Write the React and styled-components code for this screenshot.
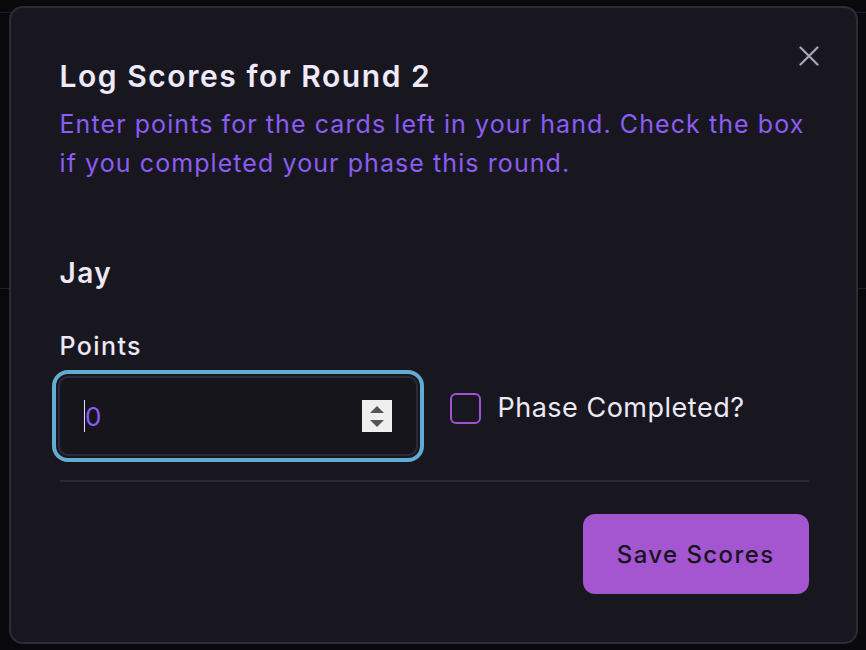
import React, { useState } from 'react';
import styled, { createGlobalStyle } from 'styled-components';

const GlobalStyle = createGlobalStyle`
  * { box-sizing: border-box; }
  html, body { margin: 0; padding: 0; background: #09090b; }
  body { font-family: Inter, "Noto Sans", "Liberation Sans", sans-serif; }
`;

const Overlay = styled.div`
  width: 866px;
  height: 650px;
  display: flex;
  align-items: center;
  justify-content: center;
  background:
    linear-gradient(to bottom, transparent 12px, #231b2a 12px, #231b2a 13px, transparent 13px),
    linear-gradient(to bottom, transparent 288px, #261c2c 288px, #261c2c 289px, transparent 289px),
    #09090b;
`;

const Dialog = styled.section`
  position: relative;
  width: 849px;
  background: #18171f;
  border: 2px solid #2c2a3b;
  border-radius: 14px;
  padding: 50px 47px 48px 49px;
  display: flex;
  flex-direction: column;
`;

const CloseButton = styled.button`
  position: absolute;
  top: 24px;
  right: 23px;
  width: 48px;
  height: 48px;
  display: flex;
  align-items: center;
  justify-content: center;
  background: transparent;
  border: none;
  border-radius: 8px;
  color: #a9a5b8;
  cursor: pointer;
  padding: 0;
`;

const Title = styled.h2`
  margin: 0;
  font-size: 30px;
  line-height: 36px;
  font-weight: 600;
  color: #eeeafb;
  letter-spacing: 1.55px;
`;

const Description = styled.p`
  margin: 11px 0 0;
  font-size: 25px;
  line-height: 39px;
  font-weight: 400;
  color: #8b5cf6;
  letter-spacing: 1.08px;
`;

const PlayerName = styled.h3`
  margin: 74px 0 0;
  font-size: 28px;
  line-height: 32.4px;
  font-weight: 600;
  color: #ece8f6;
  letter-spacing: 1.5px;
`;

const FieldLabel = styled.label`
  display: block;
  margin-top: 39px;
  font-size: 25px;
  line-height: 36px;
  font-weight: 500;
  color: #ece8f6;
  letter-spacing: 1.4px;
`;

const FieldRow = styled.div`
  margin-top: 11.7px;
  margin-left: -2px;
  display: flex;
  align-items: center;
  gap: 32px;
`;

const NumberField = styled.div`
  width: 360px;
  height: 80px;
  display: flex;
  align-items: center;
  padding: 0 24px;
  border: 2px solid #2c2a3a;
  border-radius: 10px;
  background: #16151c;
  box-shadow: 0 0 0 2px #18171f, 0 0 0 6px #62acd2;
`;

const Caret = styled.span`
  width: 1.5px;
  height: 32px;
  background: #e4e0f2;
  flex-shrink: 0;
`;

const NumberInput = styled.input`
  flex: 1;
  min-width: 0;
  height: 100%;
  border: none;
  outline: none;
  background: transparent;
  padding: 0;
  font-family: inherit;
  font-size: 26px;
  color: #8b5cf6;
  caret-color: transparent;
`;

const Spinner = styled.div`
  width: 30px;
  height: 32px;
  background: #efefef;
  display: flex;
  flex-direction: column;
  align-items: center;
  justify-content: center;
  gap: 7px;
`;

const Arrow = styled.span`
  width: 0;
  height: 0;
  border-left: 7px solid transparent;
  border-right: 7px solid transparent;
  ${({ $down }) => ($down ? 'border-top: 7px solid #555;' : 'border-bottom: 7px solid #555;')}
`;

const CheckLabel = styled.label`
  display: flex;
  align-items: center;
  gap: 17px;
  margin-bottom: 16px;
  font-size: 27px;
  line-height: 36px;
  color: #ece8f6;
  letter-spacing: 0.5px;
  cursor: pointer;
`;

const CheckBox = styled.span`
  width: 31px;
  height: 31px;
  border: 2px solid #a052d2;
  border-radius: 6px;
  background: ${({ $checked }) => ($checked ? '#a052d2' : 'transparent')};
`;

const Divider = styled.hr`
  margin: 24px 0 0;
  border: none;
  height: 2px;
  background: #2a2837;
`;

const Footer = styled.div`
  margin-top: 32px;
  display: flex;
  justify-content: flex-end;
`;

const SaveButton = styled.button`
  height: 80px;
  padding: 0 34px;
  border: none;
  border-radius: 12px;
  background: #a455d0;
  color: #17141f;
  font-family: inherit;
  font-size: 24px;
  font-weight: 500;
  letter-spacing: 1.4px;
  cursor: pointer;
`;

const App = () => {
  const [points, setPoints] = useState('0');
  const [done, setDone] = useState(false);

  return (
    <>
      <GlobalStyle />
      <Overlay>
        <Dialog role="dialog" aria-labelledby="log-title">
          <CloseButton aria-label="Close">
            <svg width="20" height="20" viewBox="0 0 20 20" fill="none">
              <path d="M1.5 1.5 18.5 18.5M18.5 1.5 1.5 18.5" stroke="currentColor" strokeWidth="2.2" strokeLinecap="round" />
            </svg>
          </CloseButton>
          <Title id="log-title">Log Scores for Round 2</Title>
          <Description>
            Enter points for the cards left in your hand. Check the box if you completed your phase this round.
          </Description>

          <PlayerName>Jay</PlayerName>
          <FieldLabel htmlFor="points-jay">Points</FieldLabel>
          <FieldRow>
            <NumberField>
              <Caret />
              <NumberInput
                id="points-jay"
                value={points}
                onChange={(e) => setPoints(e.target.value)}
              />
              <Spinner>
                <Arrow />
                <Arrow $down />
              </Spinner>
            </NumberField>
            <CheckLabel onClick={() => setDone(!done)}>
              <CheckBox $checked={done} />
              Phase Completed?
            </CheckLabel>
          </FieldRow>

          <Divider />
          <Footer>
            <SaveButton>Save Scores</SaveButton>
          </Footer>
        </Dialog>
      </Overlay>
    </>
  );
};

export default App;
